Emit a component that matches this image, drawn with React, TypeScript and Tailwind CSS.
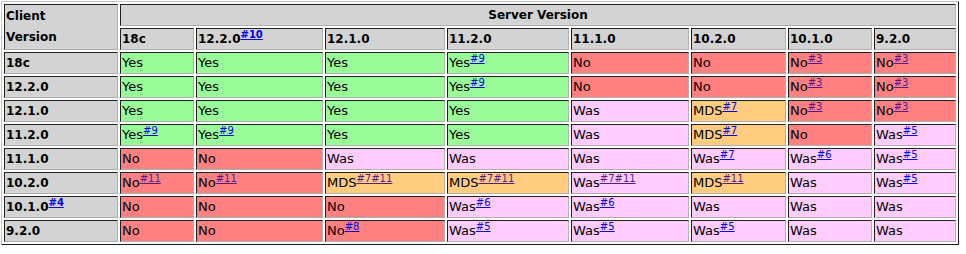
import React from "react";

type Cell = { v: "Yes" | "No" | "Was" | "MDS"; n?: string };

const bg: Record<Cell["v"], string> = {
  Yes: "bg-[#98fb98]",
  No: "bg-[#ff8080]",
  Was: "bg-[#ffccff]",
  MDS: "bg-[#ffcc80]",
};

const cols = [
  { w: "w-[74px]", label: "18c" },
  { w: "w-[127px]", label: "12.2.0", note: "#10" },
  { w: "w-[120px]", label: "12.1.0" },
  { w: "w-[122px]", label: "11.2.0" },
  { w: "w-[118px]", label: "11.1.0" },
  { w: "w-[95px]", label: "10.2.0" },
  { w: "w-[84px]", label: "10.1.0" },
  { w: "w-[82px]", label: "9.2.0" },
];

const c = (v: Cell["v"], n?: string): Cell => ({ v, n });

const rows: { label: string; note?: string; cells: Cell[] }[] = [
  { label: "18c", cells: [c("Yes"), c("Yes"), c("Yes"), c("Yes", "#9"), c("No"), c("No"), c("No", "#3"), c("No", "#3")] },
  { label: "12.2.0", cells: [c("Yes"), c("Yes"), c("Yes"), c("Yes", "#9"), c("No"), c("No"), c("No", "#3"), c("No", "#3")] },
  { label: "12.1.0", cells: [c("Yes"), c("Yes"), c("Yes"), c("Yes"), c("Was"), c("MDS", "#7"), c("No", "#3"), c("No", "#3")] },
  { label: "11.2.0", cells: [c("Yes", "#9"), c("Yes", "#9"), c("Yes"), c("Yes"), c("Was"), c("MDS", "#7"), c("No"), c("Was", "#5")] },
  { label: "11.1.0", cells: [c("No"), c("No"), c("Was"), c("Was"), c("Was"), c("Was", "#7"), c("Was", "#6"), c("Was", "#5")] },
  { label: "10.2.0", cells: [c("No", "#11"), c("No", "#11"), c("MDS", "#7#11"), c("MDS", "#7#11"), c("Was", "#7#11"), c("MDS", "#11"), c("Was"), c("Was", "#5")] },
  { label: "10.1.0", note: "#4", cells: [c("No"), c("No"), c("No"), c("Was", "#6"), c("Was", "#6"), c("Was"), c("Was"), c("Was")] },
  { label: "9.2.0", cells: [c("No"), c("No"), c("No", "#8"), c("Was", "#5"), c("Was", "#5"), c("Was", "#5"), c("Was"), c("Was")] },
];

// old-school inset cell edge
const edge =
  "border border-t-[#202020] border-l-[#202020] border-b-[#b0b0b0] border-r-[#b0b0b0]";

const head = "bg-[#d3d3d3] text-[12px] font-bold";

const Note = ({ n, bold }: { n: string; bold?: boolean }) => {
  const visited = n.includes("#11") || n === "#3";
  return (
    <sup
      className={`relative -top-[5px] text-[10px] underline ${bold ? "font-bold" : "font-normal"} ${
        visited ? "text-[#551a8b]" : "text-[#0000ee]"
      }`}
    >
      {n}
    </sup>
  );
};

export default function App() {
  return (
    <div className="bg-white w-[966px] h-[254px] pt-px pl-px font-['DejaVu_Sans',Verdana,sans-serif] text-[13px] text-black">
      <table className="table-fixed w-[958px] border-separate border-spacing-[2px] border border-t-[#c8c8c8] border-l-[#c8c8c8] border-b-[#202020] border-r-[#202020]">
        <colgroup>
          <col className="w-[114px]" />
          {cols.map((col) => (
            <col key={col.label} className={col.w} />
          ))}
        </colgroup>
        <thead>
          <tr>
            <th rowSpan={2} className={`${edge} ${head} text-left align-middle px-px leading-[21px]`}>
              Client
              <br />
              Version
            </th>
            <th colSpan={8} className={`${edge} ${head} h-[22px] p-0 text-center`}>
              Server Version
            </th>
          </tr>
          <tr>
            {cols.map((col) => (
              <th key={col.label} className={`${edge} ${head} h-[22px] p-0 px-px text-left whitespace-nowrap`}>
                {col.label}
                {col.note && <Note n={col.note} bold />}
              </th>
            ))}
          </tr>
        </thead>
        <tbody>
          {rows.map((r) => (
            <tr key={r.label}>
              <th className={`${edge} ${head} h-[22px] p-0 px-px text-left whitespace-nowrap`}>
                {r.label}
                {r.note && <Note n={r.note} bold />}
              </th>
              {r.cells.map((cell, i) => (
                <td key={i} className={`${edge} ${bg[cell.v]} h-[22px] p-0 px-px whitespace-nowrap`}>
                  {cell.v}
                  {cell.n && <Note n={cell.n} />}
                </td>
              ))}
            </tr>
          ))}
        </tbody>
      </table>
    </div>
  );
}
